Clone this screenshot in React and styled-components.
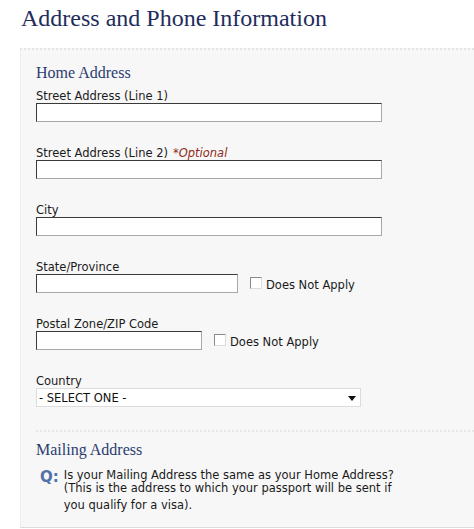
import React from 'react'
import styled, { createGlobalStyle } from 'styled-components'

const GlobalStyle = createGlobalStyle`
    body {
        margin: 0;
        background: #ffffff;
        font-family: "DejaVu Sans", Verdana, sans-serif;
    }
`
const Page = styled.div`
    width: 474px;
    height: 529px;
    overflow: hidden;
`
const Title = styled.h1`
    margin: 0;
    padding: 3px 0 0 21px;
    height: 48px;
    box-sizing: border-box;
    font-family: "Liberation Serif", "Times New Roman", serif;
    font-weight: normal;
    font-size: 24px;
    line-height: 30px;
    color: #1f2d5c;
`
const Panel = styled.div`
    margin-left: 20px;
    height: 480px;
    box-sizing: border-box;
    background: #f7f7f7;
    border-top: 2px dotted #e4e4e4;
    border-left: 1px dotted #e4e4e4;
    border-bottom: 1px solid #dcdcdc;
    padding: 12px 0 0 15px;
`
const Heading = styled.h2`
    margin: 0;
    font-family: "Liberation Serif", "Times New Roman", serif;
    font-weight: normal;
    font-size: 16px;
    line-height: 22px;
    color: #2b3c70;
`
const Fields = styled.div`
    display: flex;
    flex-direction: column;
    gap: 25px;
    margin-top: 6px;
`
const Field = styled.div`
    display: flex;
    flex-direction: column;
`
const Label = styled.label`
    font-size: 11.5px;
    line-height: 13px;
    color: #1a1a1a;
`
const Optional = styled.em`
    color: #8e2b1c;
    margin-left: 5px;
`
const Row = styled.div`
    display: flex;
    align-items: center;
`
const TextInput = styled.input`
    width: ${({w}) => w}px;
    height: 19px;
    box-sizing: border-box;
    margin: 0;
    background: #ffffff;
    border: 1px solid;
    border-color: #3a3a3a #a8a8a8 #a8a8a8 #3a3a3a;
`
const Check = styled.input`
    appearance: none;
    width: 12px;
    height: 12px;
    margin: 0 4px 0 12px;
    background: #ffffff;
    border: 1px solid;
    border-color: #8a8a8a #dddddd #dddddd #8a8a8a;
    position: relative;
    top: -1px;
`
const CheckText = styled.span`
    font-size: 11.5px;
    color: #1a1a1a;
    position: relative;
    top: 1px;
`
const SelectWrap = styled.div`
    position: relative;
    width: 325px;
    height: 19px;
`
const Select = styled.select`
    appearance: none;
    display: block;
    width: 100%;
    height: 19px;
    box-sizing: border-box;
    margin: 0;
    padding: 0 0 0 2px;
    background: #ffffff;
    border: 1px solid #dcdcdc;
    font-family: "DejaVu Sans", Verdana, sans-serif;
    font-size: 11.5px;
    color: #111111;
`
const Arrow = styled.span`
    position: absolute;
    right: 5px;
    top: 8px;
    width: 0;
    height: 0;
    border-left: 4px solid transparent;
    border-right: 4px solid transparent;
    border-top: 5px solid #111111;
    pointer-events: none;
`
const Divider = styled.hr`
    margin: 23px 0 7px 0;
    border: 0;
    border-top: 2px dotted #e6e6e6;
`
const Question = styled.div`
    display: flex;
    gap: 5px;
    margin: 8px 0 0 4px;
`
const QMark = styled.span`
    font-family: "DejaVu Sans", Verdana, sans-serif;
    font-weight: bold;
    font-size: 15px;
    line-height: 16px;
    color: #4f72a8;
`
const QText = styled.p`
    margin: 0;
    font-size: 11.5px;
    line-height: 13px;
    color: #1a1a1a;
    span {
        display: block;
        margin-top: 4px;
    }
`

function App() {
    return (
        <Page>
            <GlobalStyle />
            <Title>Address and Phone Information</Title>
            <Panel>
                <Heading>Home Address</Heading>
                <Fields>
                    <Field>
                        <Label>Street Address (Line 1)</Label>
                        <TextInput w={346} />
                    </Field>
                    <Field>
                        <Label>Street Address (Line 2)<Optional>*Optional</Optional></Label>
                        <TextInput w={346} />
                    </Field>
                    <Field>
                        <Label>City</Label>
                        <TextInput w={346} />
                    </Field>
                    <Field>
                        <Label>State/Province</Label>
                        <Row>
                            <TextInput w={202} />
                            <Check type="checkbox" />
                            <CheckText>Does Not Apply</CheckText>
                        </Row>
                    </Field>
                    <Field>
                        <Label>Postal Zone/ZIP Code</Label>
                        <Row>
                            <TextInput w={166} />
                            <Check type="checkbox" />
                            <CheckText>Does Not Apply</CheckText>
                        </Row>
                    </Field>
                    <Field>
                        <Label>Country</Label>
                        <SelectWrap>
                            <Select defaultValue="">
                                <option value="">- SELECT ONE -</option>
                            </Select>
                            <Arrow />
                        </SelectWrap>
                    </Field>
                </Fields>
                <Divider />
                <Heading>Mailing Address</Heading>
                <Question>
                    <QMark>Q:</QMark>
                    <QText>
                        Is your Mailing Address the same as your Home Address?<br />
                        (This is the address to which your passport will be sent if
                        <span>you qualify for a visa).</span>
                    </QText>
                </Question>
            </Panel>
        </Page>
    )
}

export default App
